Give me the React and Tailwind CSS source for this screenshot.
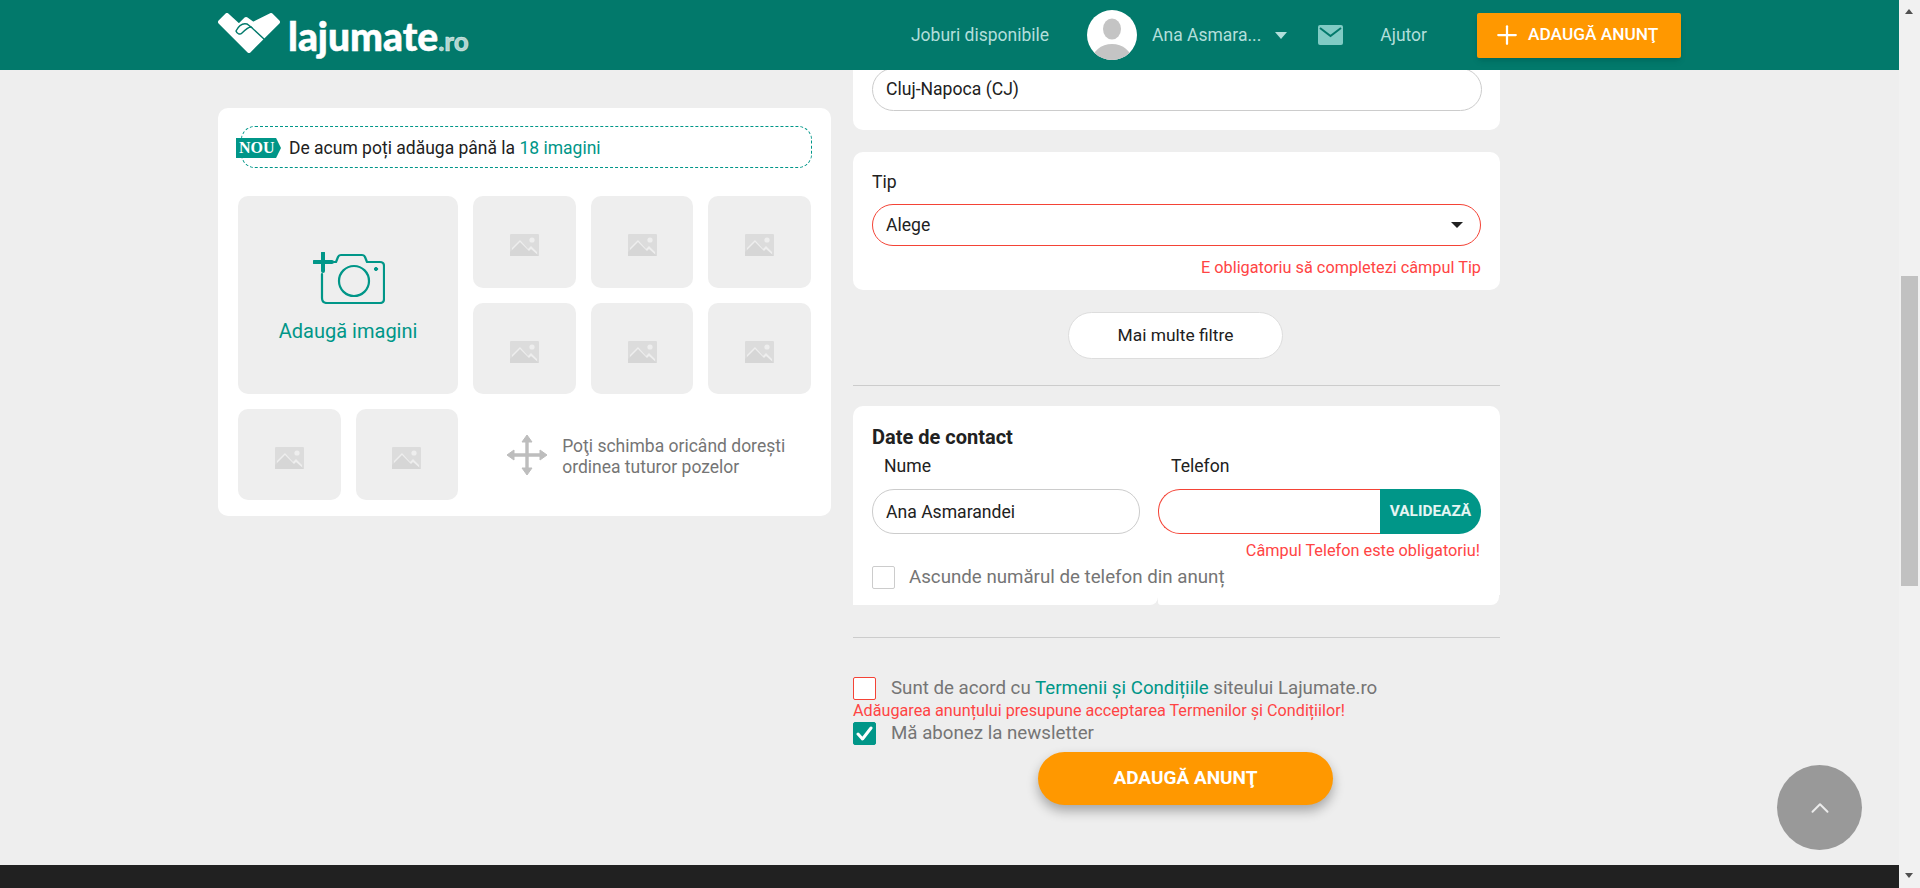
import React from 'react';
import { Plus, ChevronUp } from 'lucide-react';

const LogoMark = () => (
    <svg width="62" height="40" viewBox="0 0 62 40" className="-mt-[4px] shrink-0">
        <path d="M2 9 L9 2 L21 13 L28 6 L35 11 L53 2 L60 9 L31 38 Z" fill="#fff" stroke="#fff" strokeWidth="4" strokeLinejoin="round" />
        <path d="M18 18 C21 12 25 10 29 11 L33 14 C30 14 27 17 24 20 C22 22 19 21 18 18 Z" fill="none" stroke="#02796b" strokeWidth="1.4" />
        <path d="M33 14 L46 26" fill="none" stroke="#02796b" strokeWidth="1.4" strokeLinecap="round" />
    </svg>
);

const ImagePlaceholder = () => (
    <svg width="29" height="22" viewBox="0 0 29 22" className="mt-[6px]">
        <rect width="29" height="22" rx="1" fill="#dcdcdc" />
        <path d="M2 20 L2 14 L10 6 L18 15 L21 12 L27 18 L27 20 Z" fill="#eeeeee" />
        <path d="M0 22 L0 18 L10 8 L19 17 L21 15 L29 22 Z" fill="#d6d6d6" />
        <circle cx="22" cy="6" r="2.6" fill="#eeeeee" />
    </svg>
);

const Tile = () => (
    <div className="flex items-center justify-center rounded-[10px] bg-[#eeeeee]">
        <ImagePlaceholder />
    </div>
);

const CameraIcon = () => (
    <svg width="72" height="52" viewBox="0 0 72 52" fill="none" stroke="#009688" strokeLinecap="round" strokeLinejoin="round">
        <path d="M9 22 L9 46 Q9 51 14 51 L67 51 Q71 51 71 47 L71 14 Q71 10 67 10 L54 10 L52 5 Q51 3 49 3 L28 3 Q26 3 25 5 L23 10 L21 10" strokeWidth="2.2" />
        <circle cx="41" cy="29" r="15" strokeWidth="2.2" />
        <circle cx="63" cy="17" r="1.6" fill="#009688" strokeWidth="1" />
        <path d="M10 1 L10 19 M1 10 L19 10" strokeWidth="4" />
    </svg>
);

const MoveIcon = () => (
    <svg width="42" height="42" viewBox="0 0 42 42" fill="#bdbdbd" stroke="#bdbdbd" strokeLinejoin="round">
        <path d="M21 4 L21 38 M4 21 L38 21" strokeWidth="3.4" fill="none" />
        <path d="M21 1 L26 8 L16 8 Z M21 41 L26 34 L16 34 Z M1 21 L8 16 L8 26 Z M41 21 L34 16 L34 26 Z" strokeWidth="1" />
    </svg>
);

const Checkbox = ({ className = '', children }) => (
    <span className={`flex h-[23px] w-[23px] shrink-0 items-center justify-center rounded-[2px] border ${className}`}>
        {children}
    </span>
);

export default function App() {
    return (
        <div className="flex h-[888px] w-full overflow-hidden bg-[#eeeeee] text-[#212121] [font-family:Roboto,sans-serif]">
            <div className="relative flex h-full min-w-0 flex-1 flex-col">
                {/* Header, stays over the scrolled page */}
                <header className="absolute inset-x-0 top-0 z-10 flex h-[70px] items-center justify-between bg-[#02796b] px-[218px]">
                    <div className="flex items-center">
                        <LogoMark />
                        <span className="ml-[8px] mt-[2px] text-[39px] font-black leading-none text-white [-webkit-text-stroke:0.5px] [font-family:Lato,sans-serif]">
                            lajumate<span className="text-[26px] text-white/70">.ro</span>
                        </span>
                    </div>
                    <nav className="flex items-center text-[17.5px] text-[#b2dfdb]">
                        <span>Joburi disponibile</span>
                        <div className="ml-[38px] h-[50px] w-[50px] overflow-hidden rounded-full bg-white">
                            <svg width="50" height="50" viewBox="0 0 50 50">
                                <ellipse cx="25" cy="19" rx="9" ry="10.5" fill="#c4c4c4" />
                                <ellipse cx="25" cy="51" rx="20" ry="17" fill="#c4c4c4" />
                            </svg>
                        </div>
                        <span className="ml-[15px]">Ana Asmara...</span>
                        <span className="ml-[14px] h-0 w-0 border-x-[6.5px] border-t-[7px] border-x-transparent border-t-[#b2dfdb]"></span>
                        <svg width="25" height="20" viewBox="0 0 25 20" className="ml-[31px]">
                            <rect width="25" height="20" rx="2" fill="#80cbc4" />
                            <path d="M2 3 L12.5 11 L23 3" fill="none" stroke="#02796b" strokeWidth="2" />
                        </svg>
                        <span className="ml-[37px]">Ajutor</span>
                        <button className="ml-[50px] flex h-[45px] w-[204px] items-center rounded-[2px] bg-[#ff9800] pl-[15px] text-[17.3px] font-medium text-white shadow-md">
                            <Plus size={30} strokeWidth={1.8} />
                            <span className="ml-[6px]">ADAUGĂ ANUNŢ</span>
                        </button>
                    </nav>
                </header>

                <main className="flex min-h-0 flex-1 items-start gap-[22px] pl-[218px]">
                    {/* Images */}
                    <section className="mt-[108px] w-[613px] rounded-[10px] bg-white px-[20px] pb-[16px] pt-[18px]">
                        <div className="relative ml-[3px] flex h-[42px] w-[571px] items-center rounded-[14px] border border-dashed border-[#009688] pl-[47px] pt-[2px] text-[17.5px]">
                            <span className="absolute -left-[6px] top-[11px] flex h-[20px] w-[45px] items-center bg-[#009688] pl-[3px] text-[16px] font-bold text-white [clip-path:polygon(0_0,89%_0,100%_50%,89%_100%,0_100%)] [font-family:'Liberation_Serif',serif]">
                                NOU
                            </span>
                            <span>
                                De acum poți adăuga până la <span className="text-[#009688]">18 imagini</span>
                            </span>
                        </div>
                        <div className="mt-[28px] grid grid-cols-5 grid-rows-[92px_91px_91px] gap-[15px]">
                            <div className="col-span-2 row-span-2 flex flex-col items-center rounded-[10px] bg-[#eeeeee] pt-[56px]">
                                <div className="-mr-[2px]">
                                    <CameraIcon />
                                </div>
                                <span className="mt-[12px] text-[20px] text-[#009688]">Adaugă imagini</span>
                            </div>
                            <Tile />
                            <Tile />
                            <Tile />
                            <Tile />
                            <Tile />
                            <Tile />
                            <Tile />
                            <Tile />
                            <div className="col-span-3 flex items-center pl-[33px] text-[17.5px] leading-[21px] text-[#757575]">
                                <MoveIcon />
                                <p className="ml-[14px] pt-[5px]">
                                    Poţi schimba oricând dorești
                                    <br />
                                    ordinea tuturor pozelor
                                </p>
                            </div>
                        </div>
                    </section>

                    {/* Form */}
                    <section className="mt-[60px] flex w-[647px] flex-col">
                        <div className="rounded-b-[10px] bg-white pb-[19px] pl-[19px] pr-[18px] pt-[8px]">
                            <input
                                readOnly
                                value="Cluj-Napoca (CJ)"
                                className="h-[43px] w-full rounded-[22px] border border-[#ccc] bg-white px-[13px] pb-[2px] text-[17.6px] outline-none"
                            />
                        </div>

                        <div className="mt-[22px] h-[138px] rounded-[10px] bg-white px-[19px] pt-[20px]">
                            <label className="block text-[17.6px] leading-[20px]">Tip</label>
                            <div className="mt-[12px] flex h-[42px] items-center justify-between rounded-[21px] border border-[#f44336] pl-[13px] pr-[17px] text-[17.6px]">
                                <span className="pt-[1px]">Alege</span>
                                <span className="h-0 w-0 border-x-[6px] border-t-[6px] border-x-transparent border-t-[#212121]"></span>
                            </div>
                            <p className="mt-[12px] text-right text-[16.3px] leading-[20px] text-[#ff4444]">
                                E obligatoriu să completezi câmpul Tip
                            </p>
                        </div>

                        <button className="ml-[215px] mt-[22px] h-[47px] w-[215px] rounded-[24px] border border-[#ddd] bg-white text-[17.4px]">
                            Mai multe filtre
                        </button>

                        <hr className="mt-[26px] border-t border-[#ccc]" />

                        {/* Contact */}
                        <div className="mt-[20px] flex h-[199px] flex-col">
                            <div className="flex-1 rounded-t-[10px] bg-white px-[19px] pt-[21px]">
                                <h3 className="text-[20px] font-bold leading-[21px]">Date de contact</h3>
                                <div className="mt-[8px] flex gap-[18px]">
                                    <div className="w-[268px] shrink-0">
                                        <label className="block pl-[12px] text-[17.6px] leading-[20px]">Nume</label>
                                        <input
                                            readOnly
                                            value="Ana Asmarandei"
                                            className="mt-[13px] h-[45px] w-full rounded-[22px] border border-[#ccc] bg-white px-[13px] text-[17.6px] outline-none"
                                        />
                                    </div>
                                    <div className="flex-1">
                                        <label className="block pl-[13px] text-[17.6px] leading-[20px]">Telefon</label>
                                        <div className="mt-[13px] flex h-[45px]">
                                            <div className="flex-1 rounded-l-[22px] border border-r-0 border-[#f44336]"></div>
                                            <button className="w-[101px] rounded-r-[22px] bg-[#009688] text-[15.4px] font-bold text-white/90">
                                                VALIDEAZĂ
                                            </button>
                                        </div>
                                    </div>
                                </div>
                                <p className="mt-[7px] pr-[1px] text-right text-[16.3px] leading-[20px] text-[#ff4444]">
                                    Câmpul Telefon este obligatoriu!
                                </p>
                                <div className="mt-[5px] flex items-center text-[18.72px] leading-[23px] text-[#757575]">
                                    <Checkbox className="border-[#ccc] bg-white" />
                                    <span className="ml-[14px]">Ascunde numărul de telefon din anunț</span>
                                </div>
                            </div>
                            <div className="flex h-[10px]">
                                <div className="w-[305px] rounded-br-[8px] bg-white"></div>
                                <div className="w-[341px] rounded-b-[8px] rounded-bl-[3px] bg-white"></div>
                            </div>
                        </div>

                        <hr className="mt-[32px] border-t border-[#ccc]" />

                        <div className="mt-[39px] flex items-center text-[18.72px] leading-[23px] text-[#757575]">
                            <Checkbox className="border-[#f44336] bg-white" />
                            <span className="ml-[15px]">
                                Sunt de acord cu <span className="text-[#009688]">Termenii și Condițiile</span> siteului Lajumate.ro
                            </span>
                        </div>
                        <p className="text-[16.2px] leading-[22px] text-[#ff4444]">
                            Adăugarea anunțului presupune acceptarea Termenilor și Condițiilor!
                        </p>
                        <div className="flex items-center text-[18.72px] leading-[23px] text-[#757575]">
                            <Checkbox className="border-[#009688] bg-[#009688]">
                                <svg width="17" height="15" viewBox="0 0 17 15" fill="none" stroke="#fff" strokeWidth="3" strokeLinecap="round" strokeLinejoin="round">
                                    <path d="M2 8 L6.5 13 L15 2" />
                                </svg>
                            </Checkbox>
                            <span className="ml-[15px]">Mă abonez la newsletter</span>
                        </div>
                        <button className="ml-[185px] mt-[7px] h-[53px] w-[295px] rounded-[27px] bg-[#ff9800] text-[19px] font-bold text-white shadow-[0_6px_12px_rgba(0,0,0,0.3)]">
                            ADAUGĂ ANUNŢ
                        </button>
                    </section>
                </main>

                <footer className="h-[23px] shrink-0 bg-[#212121]"></footer>

                {/* Back to top */}
                <button className="absolute bottom-[38px] right-[37px] flex h-[85px] w-[85px] items-center justify-center rounded-full bg-[#999] text-white/80">
                    <ChevronUp size={30} strokeWidth={1.6} />
                </button>
            </div>

            {/* Scrollbar */}
            <div className="flex h-full w-[21px] shrink-0 flex-col bg-[#f1f1f1] pl-[2px] pr-[2px]">
                <span className="ml-[4px] mt-[9px] h-0 w-0 border-x-[4.5px] border-b-[5px] border-x-transparent border-b-[#505050]"></span>
                <div className="mt-[262px] h-[310px] w-[17px] bg-[#c1c1c1]"></div>
                <span className="ml-[4px] mt-[287px] h-0 w-0 border-x-[4.5px] border-t-[5px] border-x-transparent border-t-[#505050]"></span>
            </div>
        </div>
    );
}
